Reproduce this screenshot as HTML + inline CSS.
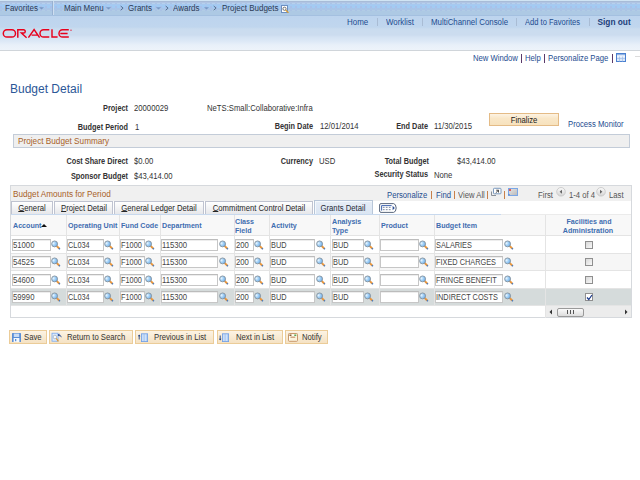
<!DOCTYPE html>
<html><head><meta charset="utf-8">
<style>
*{margin:0;padding:0;box-sizing:border-box}
html,body{width:640px;height:480px;overflow:hidden;background:#fff;font-family:"Liberation Sans",sans-serif;font-size:8.3px;line-height:8.3px;color:#333}
.a{position:absolute;white-space:nowrap}
.r{position:absolute}
</style></head><body>
<svg width="0" height="0" style="position:absolute">
<defs>
<radialGradient id="lg" cx="0.3" cy="0.4" r="0.75"><stop offset="0" stop-color="#e8f6ff"/><stop offset="0.5" stop-color="#9ccdf6"/><stop offset="1" stop-color="#6aa8e6"/></radialGradient>
<symbol id="mag" viewBox="0 0 10 10">
<line x1="5.3" y1="5.6" x2="8.2" y2="8.5" stroke="#e8963c" stroke-width="1.9"/>
<line x1="7.9" y1="8.2" x2="8.9" y2="9.2" stroke="#4a78b8" stroke-width="1.5"/>
<circle cx="3.6" cy="3.9" r="2.95" fill="url(#lg)" stroke="#87939d" stroke-width="0.9"/>
</symbol>
<symbol id="dd" viewBox="0 0 5 3"><path d="M0 0.2H5L2.5 2.4Z" fill="#7898c4"/></symbol>
<symbol id="chev" viewBox="0 0 4 6"><path d="M0.7 1L3.1 3.1L0.7 5.2" fill="none" stroke="#56708f" stroke-width="1"/></symbol>
</defs>
</svg>

<div class="r" style="left:0;top:0;width:640px;height:16px;background:linear-gradient(#d0e4f4 0,#d0e4f4 1px,#a8bcd8 1px,#a8bcd8 2px,#b0c4e4 2px,#b0c4e4 3px,#b4d0ec 3px,#b4d0ec 4px,#a8c8f0 4px,#a8c8f0 5px,#a2cbf3 5px,#a2cbf3 8px,#a8c4e8 8px,#abc5e6 10px,#b0cbe4 10px,#b0cbe4 11px,#adc9e4 11px,#adc9e4 15px);border-bottom:1px solid #a4c0e0"></div>
<div class="r" style="left:0;top:3px;width:640px;height:1px;background:repeating-linear-gradient(90deg,#aac4e6 0 2px,#b6d1ec 2px 5px)"></div>
<div class="r" style="left:0;top:6px;width:640px;height:2px;background:repeating-linear-gradient(90deg,#a9c0ea 0 2px,#a2cbf3 2px 5px)"></div>
<div class="r" style="left:0;top:10px;width:640px;height:1px;background:repeating-linear-gradient(90deg,#aac2e5 0 2px,#b1cce5 2px 5px)"></div>
<div class="r" style="left:0;top:16px;width:640px;height:35px;background:linear-gradient(#bdd4ee 0,#c0d6ee 11px,#cadcef 13px,#ccdcef 19px,#d4e2f3 21px,#dce8f6 25px,#e8f0f9 29px,#edf3fa 34px);border-bottom:1px solid #d0d5da"></div>
<div class="a" id="t0" style="left:5px;transform-origin:0 0;top:4px;font-size:8.3px;line-height:8.3px;color:#2c3b55;transform:scaleX(0.965);">Favorites</div>
<svg class="r" style="left:39px;top:7px" width="5" height="3"><use href="#dd"/></svg>
<div class="r" style="left:52px;top:1px;width:1px;height:14px;background:#98b2d2"></div>
<div class="r" style="left:53px;top:1px;width:1px;height:14px;background:#cfdef0"></div>
<div class="a" id="t1" style="left:63.5px;transform-origin:0 0;top:4px;font-size:8.3px;line-height:8.3px;color:#2c3b55;transform:scaleX(0.965);">Main Menu</div>
<svg class="r" style="left:105.5px;top:7px" width="5" height="3"><use href="#dd"/></svg>
<svg class="r" style="left:119.5px;top:5px" width="4" height="6"><use href="#chev"/></svg>
<div class="a" id="t2" style="left:127.5px;transform-origin:0 0;top:4px;font-size:8.3px;line-height:8.3px;color:#2c3b55;transform:scaleX(0.965);">Grants</div>
<svg class="r" style="left:155.5px;top:7px" width="5" height="3"><use href="#dd"/></svg>
<svg class="r" style="left:164.5px;top:5px" width="4" height="6"><use href="#chev"/></svg>
<div class="a" id="t3" style="left:172.5px;transform-origin:0 0;top:4px;font-size:8.3px;line-height:8.3px;color:#2c3b55;transform:scaleX(0.965);">Awards</div>
<svg class="r" style="left:203.5px;top:7px" width="5" height="3"><use href="#dd"/></svg>
<svg class="r" style="left:212.5px;top:5px" width="4" height="6"><use href="#chev"/></svg>
<div class="a" id="t4" style="left:221.5px;transform-origin:0 0;top:4px;font-size:8.3px;line-height:8.3px;color:#2c3b55;transform:scaleX(0.965);">Project Budgets</div>
<svg class="r" style="left:281px;top:5px" width="8" height="8" viewBox="0 0 8 8"><rect x="0.5" y="0.5" width="6" height="7" fill="#fff" stroke="#6c8fc0"/><circle cx="3.5" cy="3.8" r="1.6" fill="none" stroke="#555" stroke-width="0.8"/><line x1="4.6" y1="5" x2="7.5" y2="7.8" stroke="#d89a30" stroke-width="1.2"/></svg>
<svg class="r" style="left:0;top:26px" width="76" height="15" viewBox="0 0 76 15">
<g fill="none" stroke="#e8001c" stroke-width="1.45">
<rect x="3.3" y="3.75" width="12.2" height="7.25" rx="3.625"/>
<path d="M17.8 11.7V3.75H23.6A1.65 1.65 0 0 1 23.6 7.05H21.4L26.6 11.7"/>
<path d="M28.4 11.7L34.1 3.5L39.6 11.7M31.6 9.1H37.4"/>
<path d="M49.3 3.75H43.6A3.625 3.625 0 0 0 43.6 11H49.3"/>
<path d="M52 3.2V11H57.6"/>
<path d="M68.8 3.75H62.6A3.625 3.625 0 0 0 62.6 11H68.8M60.3 7.4H67.6"/>
</g>
<circle cx="71" cy="4.2" r="0.65" fill="#e8001c"/>
</svg>
<div class="a" id="t5" style="left:347px;transform-origin:0 0;top:18px;font-size:8.3px;line-height:8.3px;color:#1d4c8f;transform:scaleX(0.96);">Home</div>
<div class="r" style="left:377px;top:18px;width:1px;height:8px;background:#a9bcd4"></div>
<div class="a" id="t6" style="left:386px;transform-origin:0 0;top:18px;font-size:8.3px;line-height:8.3px;color:#1d4c8f;transform:scaleX(0.95);">Worklist</div>
<div class="r" style="left:422px;top:18px;width:1px;height:8px;background:#a9bcd4"></div>
<div class="a" id="t7" style="left:431px;transform-origin:0 0;top:18px;font-size:8.3px;line-height:8.3px;color:#1d4c8f;transform:scaleX(0.95);">MultiChannel Console</div>
<div class="r" style="left:516px;top:18px;width:1px;height:8px;background:#a9bcd4"></div>
<div class="a" id="t8" style="left:525px;transform-origin:0 0;top:18px;font-size:8.3px;line-height:8.3px;color:#1d4c8f;transform:scaleX(0.91);">Add to Favorites</div>
<div class="r" style="left:589px;top:18px;width:1px;height:8px;background:#a9bcd4"></div>
<div class="a" id="t9" style="left:597.5px;transform-origin:0 0;top:18px;font-size:8.3px;line-height:8.3px;font-weight:bold;color:#1d3f7a;transform:scaleX(1.0);">Sign out</div>
<div class="a" id="t10" style="left:473px;transform-origin:0 0;top:54px;font-size:8.3px;line-height:8.3px;color:#1d4c8f;transform:scaleX(0.928);">New Window</div>
<div class="r" style="left:521px;top:54px;width:1px;height:9px;background:#5a3a6a"></div>
<div class="a" id="t11" style="left:525px;transform-origin:0 0;top:54px;font-size:8.3px;line-height:8.3px;color:#1d4c8f;transform:scaleX(0.928);">Help</div>
<div class="r" style="left:544px;top:54px;width:1px;height:9px;background:#5a3a6a"></div>
<div class="a" id="t12" style="left:548px;transform-origin:0 0;top:54px;font-size:8.3px;line-height:8.3px;color:#1d4c8f;transform:scaleX(0.928);">Personalize Page</div>
<div class="r" style="left:612px;top:54px;width:1px;height:9px;background:#5a3a6a"></div>
<svg class="r" style="left:616px;top:53px" width="10" height="9" viewBox="0 0 10 9"><rect x="0.5" y="0.5" width="9" height="8" fill="#dce8f8" stroke="#4a80d0"/><rect x="1" y="1" width="8" height="1.5" fill="#8fb2e4"/><rect x="1" y="2.5" width="8" height="1" fill="#fff"/><path d="M1 5.5H9M3.5 3.5V8.5M6.5 3.5V8.5" stroke="#9fbde8" stroke-width="0.7"/></svg>
<div class="r" style="left:635px;top:56px;width:5px;height:1px;background:#dcdcdc"></div>
<div class="a" id="t13" style="left:10px;transform-origin:0 0;top:83px;font-size:12px;line-height:12px;color:#2b5797;transform:scaleX(1.0);">Budget Detail</div>
<div class="a" id="t14" style="left:-272px;width:400px;text-align:right;transform-origin:100% 0;top:104px;font-size:8.3px;line-height:8.3px;font-weight:bold;color:#333;transform:scaleX(0.885);">Project</div>
<div class="a" id="t15" style="left:134px;transform-origin:0 0;top:104px;font-size:8.3px;line-height:8.3px;color:#333;transform:scaleX(0.928);">20000029</div>
<div class="a" id="t16" style="left:206.5px;transform-origin:0 0;top:104px;font-size:8.3px;line-height:8.3px;color:#333;transform:scaleX(0.928);">NeTS:Small:Collaborative:Infra</div>
<div class="a" id="t17" style="left:-272px;width:400px;text-align:right;transform-origin:100% 0;top:123px;font-size:8.3px;line-height:8.3px;font-weight:bold;color:#333;transform:scaleX(0.885);">Budget Period</div>
<div class="a" id="t18" style="left:134.5px;transform-origin:0 0;top:123px;font-size:8.3px;line-height:8.3px;color:#333;transform:scaleX(0.928);">1</div>
<div class="a" id="t19" style="left:-87px;width:400px;text-align:right;transform-origin:100% 0;top:122px;font-size:8.3px;line-height:8.3px;font-weight:bold;color:#333;transform:scaleX(0.885);">Begin Date</div>
<div class="a" id="t20" style="left:319.5px;transform-origin:0 0;top:122px;font-size:8.3px;line-height:8.3px;color:#333;transform:scaleX(0.928);">12/01/2014</div>
<div class="a" id="t21" style="left:28px;width:400px;text-align:right;transform-origin:100% 0;top:122px;font-size:8.3px;line-height:8.3px;font-weight:bold;color:#333;transform:scaleX(0.885);">End Date</div>
<div class="a" id="t22" style="left:434px;transform-origin:0 0;top:122px;font-size:8.3px;line-height:8.3px;color:#333;transform:scaleX(0.928);">11/30/2015</div>
<div class="r" style="left:489px;top:113px;width:70px;height:13px;border:1px solid #e4bb86;background:linear-gradient(#fdf3e3,#f9e7c8 40%,#f7e2bd)"></div>
<div class="a" id="t23" style="left:323.5px;width:400px;text-align:center;transform-origin:50% 0;top:116px;font-size:8.3px;line-height:8.3px;color:#1a1a1a;transform:scaleX(0.928);">Finalize</div>
<div class="a" id="t24" style="left:568.3px;transform-origin:0 0;top:120px;font-size:8.3px;line-height:8.3px;color:#1d4c8f;transform:scaleX(0.928);">Process Monitor</div>
<div class="r" style="left:13px;top:134px;width:617px;height:14px;border:1px solid #c3ccd8;background:#efefef"></div>
<div class="a" id="t25" style="left:17.5px;transform-origin:0 0;top:137px;font-size:9.2px;line-height:9.2px;color:#a85f28;transform:scaleX(0.893);">Project Budget Summary</div>
<div class="a" id="t26" style="left:-272px;width:400px;text-align:right;transform-origin:100% 0;top:157px;font-size:8.3px;line-height:8.3px;font-weight:bold;color:#333;transform:scaleX(0.885);">Cost Share Direct</div>
<div class="a" id="t27" style="left:134px;transform-origin:0 0;top:157px;font-size:8.3px;line-height:8.3px;color:#333;transform:scaleX(0.928);">$0.00</div>
<div class="a" id="t28" style="left:-87px;width:400px;text-align:right;transform-origin:100% 0;top:157px;font-size:8.3px;line-height:8.3px;font-weight:bold;color:#333;transform:scaleX(0.885);">Currency</div>
<div class="a" id="t29" style="left:319px;transform-origin:0 0;top:157px;font-size:8.3px;line-height:8.3px;color:#333;transform:scaleX(0.928);">USD</div>
<div class="a" id="t30" style="left:28.5px;width:400px;text-align:right;transform-origin:100% 0;top:157px;font-size:8.3px;line-height:8.3px;font-weight:bold;color:#333;transform:scaleX(0.885);">Total Budget</div>
<div class="a" id="t31" style="left:457px;transform-origin:0 0;top:157px;font-size:8.3px;line-height:8.3px;color:#333;transform:scaleX(0.928);">$43,414.00</div>
<div class="a" id="t32" style="left:-272px;width:400px;text-align:right;transform-origin:100% 0;top:172px;font-size:8.3px;line-height:8.3px;font-weight:bold;color:#333;transform:scaleX(0.885);">Sponsor Budget</div>
<div class="a" id="t33" style="left:134px;transform-origin:0 0;top:172px;font-size:8.3px;line-height:8.3px;color:#333;transform:scaleX(0.928);">$43,414.00</div>
<div class="a" id="t34" style="left:28px;width:400px;text-align:right;transform-origin:100% 0;top:170px;font-size:8.3px;line-height:8.3px;font-weight:bold;color:#333;transform:scaleX(0.885);">Security Status</div>
<div class="a" id="t35" style="left:434px;transform-origin:0 0;top:171px;font-size:8.3px;line-height:8.3px;color:#333;transform:scaleX(0.928);">None</div>
<div class="r" style="left:10px;top:185px;width:622px;height:133px;border:1px solid #d6d9dd;background:#fff"></div>
<div class="r" style="left:11px;top:186px;width:620px;height:15px;background:#f0f0f0"></div>
<div class="a" id="t36" style="left:13px;transform-origin:0 0;top:190px;font-size:9.2px;line-height:9.2px;color:#a85f28;transform:scaleX(0.89);">Budget Amounts for Period</div>
<div class="a" id="t37" style="left:387px;transform-origin:0 0;top:191px;font-size:8.3px;line-height:8.3px;color:#1d4c8f;transform:scaleX(0.928);">Personalize</div>
<div class="r" style="left:431px;top:191px;width:1px;height:8px;background:#c8804a"></div>
<div class="a" id="t38" style="left:435.5px;transform-origin:0 0;top:191px;font-size:8.3px;line-height:8.3px;color:#1d4c8f;transform:scaleX(0.928);">Find</div>
<div class="r" style="left:454px;top:191px;width:1px;height:8px;background:#c8804a"></div>
<div class="a" id="t39" style="left:458px;transform-origin:0 0;top:191px;font-size:8.3px;line-height:8.3px;color:#555;transform:scaleX(0.928);">View All</div>
<div class="r" style="left:487px;top:191px;width:1px;height:8px;background:#c8804a"></div>
<svg class="r" style="left:490px;top:187px" width="12" height="10" viewBox="0 0 12 10"><path d="M1.5 4.5V8.5H6" fill="none" stroke="#8a9098" stroke-width="1"/><rect x="3.5" y="1.3" width="7.5" height="5.5" rx="0.8" fill="#fff" stroke="#6d8fb8" stroke-width="0.9"/><path d="M6.2 3.2H8.5V5.5M8.3 3.4L5.8 5.8" fill="none" stroke="#222" stroke-width="0.8"/></svg>
<div class="r" style="left:504px;top:191px;width:1px;height:8px;background:#c8804a"></div>
<svg class="r" style="left:508px;top:188px" width="10" height="8" viewBox="0 0 10 8"><defs><linearGradient id="sg" x1="0" y1="0" x2="1" y2="1"><stop offset="0" stop-color="#e8e8e8"/><stop offset="1" stop-color="#b8b8b8"/></linearGradient></defs><rect x="0.5" y="0.5" width="9" height="7" fill="url(#sg)" stroke="#7aa6e6"/><circle cx="2" cy="2" r="1" fill="#e03030"/><rect x="0.6" y="6.2" width="1" height="1" fill="#3060c0"/></svg>
<div class="a" id="t40" style="left:538.3px;transform-origin:0 0;top:191px;font-size:8.3px;line-height:8.3px;color:#555;transform:scaleX(0.928);">First</div>
<svg class="r" style="left:556px;top:187px" width="10" height="10" viewBox="0 0 10 10"><defs><linearGradient id="cg" x1="0" y1="0" x2="0" y2="1"><stop offset="0" stop-color="#fbfbfb"/><stop offset="1" stop-color="#d4d4d4"/></linearGradient></defs><circle cx="5" cy="4.8" r="4.3" fill="url(#cg)" stroke="#c4c4c4" stroke-width="0.8"/><path d="M6 2.8L3.6 4.8L6 6.8Z" fill="#666"/></svg>
<div class="a" id="t41" style="left:568.5px;transform-origin:0 0;top:191px;font-size:8.3px;line-height:8.3px;color:#555;transform:scaleX(0.928);">1-4 of 4</div>
<svg class="r" style="left:596px;top:187px" width="10" height="10" viewBox="0 0 10 10"><circle cx="5" cy="4.8" r="4.3" fill="url(#cg)" stroke="#c4c4c4" stroke-width="0.8"/><path d="M4 2.8L6.4 4.8L4 6.8Z" fill="#666"/></svg>
<div class="a" id="t42" style="left:608.7px;transform-origin:0 0;top:191px;font-size:8.3px;line-height:8.3px;color:#555;transform:scaleX(0.928);">Last</div>
<div class="r" style="left:11px;top:201px;width:42px;height:13px;border:1px solid #bfc3d0;border-bottom:none;background:linear-gradient(#ffffff,#e6e7ea)"></div>
<div class="a" id="t43" style="left:-168.0px;width:400px;text-align:center;transform-origin:50% 0;top:204px;font-size:8.3px;line-height:8.3px;color:#262626;transform:scaleX(0.928);text-underline-offset:0px;text-decoration-thickness:0.8px"><u>G</u>eneral</div>
<div class="r" style="left:54px;top:201px;width:59px;height:13px;border:1px solid #bfc3d0;border-bottom:none;background:linear-gradient(#ffffff,#e6e7ea)"></div>
<div class="a" id="t44" style="left:-116.5px;width:400px;text-align:center;transform-origin:50% 0;top:204px;font-size:8.3px;line-height:8.3px;color:#262626;transform:scaleX(0.928);text-underline-offset:0px;text-decoration-thickness:0.8px"><u>P</u>roject Detail</div>
<div class="r" style="left:114px;top:201px;width:90px;height:13px;border:1px solid #bfc3d0;border-bottom:none;background:linear-gradient(#ffffff,#e6e7ea)"></div>
<div class="a" id="t45" style="left:-41.0px;width:400px;text-align:center;transform-origin:50% 0;top:204px;font-size:8.3px;line-height:8.3px;color:#262626;transform:scaleX(0.928);text-underline-offset:0px;text-decoration-thickness:0.8px"><u>G</u>eneral Ledger Detail</div>
<div class="r" style="left:205px;top:201px;width:108px;height:13px;border:1px solid #bfc3d0;border-bottom:none;background:linear-gradient(#ffffff,#e6e7ea)"></div>
<div class="a" id="t46" style="left:59.0px;width:400px;text-align:center;transform-origin:50% 0;top:204px;font-size:8.3px;line-height:8.3px;color:#262626;transform:scaleX(0.928);text-underline-offset:0px;text-decoration-thickness:0.8px"><u>C</u>ommitment Control Detail</div>
<div class="r" style="left:314px;top:200px;width:59px;height:15px;border:1px solid #b8c6d8;border-bottom:none;box-shadow:inset 1px 1px 0 #f4f8fc;background:linear-gradient(#e6edf7,#dae5f2)"></div>
<div class="a" id="t47" style="left:143px;width:400px;text-align:center;transform-origin:50% 0;top:204px;font-size:8.3px;line-height:8.3px;color:#262a36;transform:scaleX(0.928);">Grants Detail</div>
<svg class="r" style="left:379px;top:203px" width="18" height="10" viewBox="0 0 18 10"><path d="M2 0.6H14.6Q16.9 0.8 17.2 5Q16.9 9.2 14.6 9.4H2A1.4 1.4 0 0 1 0.6 8V2A1.4 1.4 0 0 1 2 0.6Z" fill="#fff" stroke="#5a677e" stroke-width="1"/><path d="M2.6 7.6V2.6H12.6" fill="none" stroke="#2d55a8" stroke-width="0.9"/><g fill="#8f9bb0"><rect x="3.8" y="3.8" width="1.8" height="1.2"/><rect x="6.8" y="3.8" width="1.8" height="1.2"/><rect x="9.8" y="3.8" width="1.8" height="1.2"/><rect x="3.8" y="6" width="1.8" height="1.2"/><rect x="6.8" y="6" width="1.8" height="1.2"/><rect x="9.8" y="6" width="1.8" height="1.2"/></g><path d="M13.6 2.8L15.8 5L13.6 7.2Z" fill="#2d4f96"/></svg>
<div class="r" style="left:11px;top:214px;width:620px;height:21px;background:#f8f8f8;border-top:1px solid #ebebeb"></div>
<div class="r" style="left:11px;top:214px;width:490px;height:1px;background:#c8d9ee"></div>
<div class="r" style="left:11px;top:254px;width:620px;height:16px;background:#f6f6f6"></div>
<div class="r" style="left:11px;top:235px;width:620px;height:1px;background:#e4e4e4"></div>
<div class="r" style="left:11px;top:253px;width:620px;height:1px;background:#e4e4e4"></div>
<div class="r" style="left:11px;top:270px;width:620px;height:1px;background:#e4e4e4"></div>
<div class="r" style="left:11px;top:288px;width:620px;height:1px;background:#e4e4e4"></div>
<div class="r" style="left:11px;top:289px;width:620px;height:17px;background:#d5dbdb"></div>
<div class="r" style="left:11px;top:305px;width:620px;height:1px;background:#e4e4e4"></div>
<div class="r" style="left:66px;top:215px;width:1px;height:90px;background:#e4e4e4"></div>
<div class="r" style="left:119px;top:215px;width:1px;height:90px;background:#e4e4e4"></div>
<div class="r" style="left:160px;top:215px;width:1px;height:90px;background:#e4e4e4"></div>
<div class="r" style="left:234px;top:215px;width:1px;height:90px;background:#e4e4e4"></div>
<div class="r" style="left:269px;top:215px;width:1px;height:90px;background:#e4e4e4"></div>
<div class="r" style="left:330px;top:215px;width:1px;height:90px;background:#e4e4e4"></div>
<div class="r" style="left:379px;top:215px;width:1px;height:90px;background:#e4e4e4"></div>
<div class="r" style="left:434px;top:215px;width:1px;height:90px;background:#e4e4e4"></div>
<div class="r" style="left:545px;top:215px;width:1px;height:103px;background:#e4e4e4"></div>
<div class="a" id="t48" style="left:12.8px;transform-origin:0 0;top:222px;font-size:8px;line-height:8px;font-weight:bold;color:#3f6db0;transform:scaleX(0.89);">Account</div>
<svg class="r" style="left:41px;top:224px" width="6" height="3" viewBox="0 0 6 3"><path d="M0 3L3 0L6 3Z" fill="#111"/></svg>
<div class="a" id="t49" style="left:67.6px;transform-origin:0 0;top:222px;font-size:8px;line-height:8px;font-weight:bold;color:#3f6db0;transform:scaleX(0.89);">Operating Unit</div>
<div class="a" id="t50" style="left:120.6px;transform-origin:0 0;top:222px;font-size:8px;line-height:8px;font-weight:bold;color:#3f6db0;transform:scaleX(0.89);">Fund Code</div>
<div class="a" id="t51" style="left:161.8px;transform-origin:0 0;top:222px;font-size:8px;line-height:8px;font-weight:bold;color:#3f6db0;transform:scaleX(0.89);">Department</div>
<div class="a" id="t52" style="left:235.2px;transform-origin:0 0;top:218px;font-size:8px;line-height:8px;font-weight:bold;color:#3f6db0;transform:scaleX(0.89);">Class</div>
<div class="a" id="t53" style="left:235.2px;transform-origin:0 0;top:226.5px;font-size:8px;line-height:8px;font-weight:bold;color:#3f6db0;transform:scaleX(0.89);">Field</div>
<div class="a" id="t54" style="left:270.8px;transform-origin:0 0;top:222px;font-size:8px;line-height:8px;font-weight:bold;color:#3f6db0;transform:scaleX(0.89);">Activity</div>
<div class="a" id="t55" style="left:332px;transform-origin:0 0;top:218px;font-size:8px;line-height:8px;font-weight:bold;color:#3f6db0;transform:scaleX(0.89);">Analysis</div>
<div class="a" id="t56" style="left:332px;transform-origin:0 0;top:226.5px;font-size:8px;line-height:8px;font-weight:bold;color:#3f6db0;transform:scaleX(0.89);">Type</div>
<div class="a" id="t57" style="left:380.8px;transform-origin:0 0;top:222px;font-size:8px;line-height:8px;font-weight:bold;color:#3f6db0;transform:scaleX(0.89);">Product</div>
<div class="a" id="t58" style="left:436px;transform-origin:0 0;top:222px;font-size:8px;line-height:8px;font-weight:bold;color:#3f6db0;transform:scaleX(0.89);">Budget Item</div>
<div class="a" id="t59" style="left:388.5px;width:400px;text-align:center;transform-origin:50% 0;top:218px;font-size:8px;line-height:8px;font-weight:bold;color:#3f6db0;transform:scaleX(0.89);">Facilities and</div>
<div class="a" id="t60" style="left:388px;width:400px;text-align:center;transform-origin:50% 0;top:226.5px;font-size:8px;line-height:8px;font-weight:bold;color:#3f6db0;transform:scaleX(0.89);">Administration</div>
<div class="r" style="left:12px;top:239px;width:39px;height:12px;border:1px solid #c6c6c6;border-top-color:#bcbcbc;box-shadow:inset 0 1px 0 #ededed;background:#fff"></div>
<div class="a" id="t61" style="left:13px;transform-origin:0 0;top:241px;font-size:8.3px;line-height:8.3px;color:#444;transform:scaleX(0.928);">51000</div>
<svg class="r" style="left:51px;top:240px" width="10" height="10"><use href="#mag"/></svg>
<div class="r" style="left:67px;top:239px;width:37px;height:12px;border:1px solid #c6c6c6;border-top-color:#bcbcbc;box-shadow:inset 0 1px 0 #ededed;background:#fff"></div>
<div class="a" id="t62" style="left:68px;transform-origin:0 0;top:241px;font-size:8.3px;line-height:8.3px;color:#444;transform:scaleX(0.885);">CL034</div>
<svg class="r" style="left:104px;top:240px" width="10" height="10"><use href="#mag"/></svg>
<div class="r" style="left:120px;top:239px;width:25px;height:12px;border:1px solid #c6c6c6;border-top-color:#bcbcbc;box-shadow:inset 0 1px 0 #ededed;background:#fff"></div>
<div class="a" id="t63" style="left:121px;transform-origin:0 0;top:241px;font-size:8.3px;line-height:8.3px;color:#444;transform:scaleX(0.885);">F1000</div>
<svg class="r" style="left:145px;top:240px" width="10" height="10"><use href="#mag"/></svg>
<div class="r" style="left:161px;top:239px;width:57px;height:12px;border:1px solid #c6c6c6;border-top-color:#bcbcbc;box-shadow:inset 0 1px 0 #ededed;background:#fff"></div>
<div class="a" id="t64" style="left:162px;transform-origin:0 0;top:241px;font-size:8.3px;line-height:8.3px;color:#444;transform:scaleX(0.928);">115300</div>
<svg class="r" style="left:219px;top:240px" width="10" height="10"><use href="#mag"/></svg>
<div class="r" style="left:235px;top:239px;width:19px;height:12px;border:1px solid #c6c6c6;border-top-color:#bcbcbc;box-shadow:inset 0 1px 0 #ededed;background:#fff"></div>
<div class="a" id="t65" style="left:236px;transform-origin:0 0;top:241px;font-size:8.3px;line-height:8.3px;color:#444;transform:scaleX(0.928);">200</div>
<svg class="r" style="left:254px;top:240px" width="10" height="10"><use href="#mag"/></svg>
<div class="r" style="left:270px;top:239px;width:45px;height:12px;border:1px solid #c6c6c6;border-top-color:#bcbcbc;box-shadow:inset 0 1px 0 #ededed;background:#fff"></div>
<div class="a" id="t66" style="left:271px;transform-origin:0 0;top:241px;font-size:8.3px;line-height:8.3px;color:#444;transform:scaleX(0.885);">BUD</div>
<svg class="r" style="left:316px;top:240px" width="10" height="10"><use href="#mag"/></svg>
<div class="r" style="left:332px;top:239px;width:32px;height:12px;border:1px solid #c6c6c6;border-top-color:#bcbcbc;box-shadow:inset 0 1px 0 #ededed;background:#fff"></div>
<div class="a" id="t67" style="left:333px;transform-origin:0 0;top:241px;font-size:8.3px;line-height:8.3px;color:#444;transform:scaleX(0.885);">BUD</div>
<svg class="r" style="left:364px;top:240px" width="10" height="10"><use href="#mag"/></svg>
<div class="r" style="left:380px;top:239px;width:39px;height:12px;border:1px solid #c6c6c6;border-top-color:#bcbcbc;box-shadow:inset 0 1px 0 #ededed;background:#fff"></div>
<svg class="r" style="left:419px;top:240px" width="10" height="10"><use href="#mag"/></svg>
<div class="r" style="left:435px;top:239px;width:68px;height:12px;border:1px solid #c6c6c6;border-top-color:#bcbcbc;box-shadow:inset 0 1px 0 #ededed;background:#fff"></div>
<div class="a" id="t68" style="left:436px;transform-origin:0 0;top:241px;font-size:8.3px;line-height:8.3px;color:#444;transform:scaleX(0.885);">SALARIES</div>
<svg class="r" style="left:504px;top:240px" width="10" height="10"><use href="#mag"/></svg>
<div class="r" style="left:585px;top:241px;width:8px;height:8px;border:1px solid #8f8f8f;background:linear-gradient(135deg,#d8d8d8,#f8f8f8)"></div>
<div class="r" style="left:12px;top:256px;width:39px;height:12px;border:1px solid #c6c6c6;border-top-color:#bcbcbc;box-shadow:inset 0 1px 0 #ededed;background:#fff"></div>
<div class="a" id="t69" style="left:13px;transform-origin:0 0;top:258px;font-size:8.3px;line-height:8.3px;color:#444;transform:scaleX(0.928);">54525</div>
<svg class="r" style="left:51px;top:257px" width="10" height="10"><use href="#mag"/></svg>
<div class="r" style="left:67px;top:256px;width:37px;height:12px;border:1px solid #c6c6c6;border-top-color:#bcbcbc;box-shadow:inset 0 1px 0 #ededed;background:#fff"></div>
<div class="a" id="t70" style="left:68px;transform-origin:0 0;top:258px;font-size:8.3px;line-height:8.3px;color:#444;transform:scaleX(0.885);">CL034</div>
<svg class="r" style="left:104px;top:257px" width="10" height="10"><use href="#mag"/></svg>
<div class="r" style="left:120px;top:256px;width:25px;height:12px;border:1px solid #c6c6c6;border-top-color:#bcbcbc;box-shadow:inset 0 1px 0 #ededed;background:#fff"></div>
<div class="a" id="t71" style="left:121px;transform-origin:0 0;top:258px;font-size:8.3px;line-height:8.3px;color:#444;transform:scaleX(0.885);">F1000</div>
<svg class="r" style="left:145px;top:257px" width="10" height="10"><use href="#mag"/></svg>
<div class="r" style="left:161px;top:256px;width:57px;height:12px;border:1px solid #c6c6c6;border-top-color:#bcbcbc;box-shadow:inset 0 1px 0 #ededed;background:#fff"></div>
<div class="a" id="t72" style="left:162px;transform-origin:0 0;top:258px;font-size:8.3px;line-height:8.3px;color:#444;transform:scaleX(0.928);">115300</div>
<svg class="r" style="left:219px;top:257px" width="10" height="10"><use href="#mag"/></svg>
<div class="r" style="left:235px;top:256px;width:19px;height:12px;border:1px solid #c6c6c6;border-top-color:#bcbcbc;box-shadow:inset 0 1px 0 #ededed;background:#fff"></div>
<div class="a" id="t73" style="left:236px;transform-origin:0 0;top:258px;font-size:8.3px;line-height:8.3px;color:#444;transform:scaleX(0.928);">200</div>
<svg class="r" style="left:254px;top:257px" width="10" height="10"><use href="#mag"/></svg>
<div class="r" style="left:270px;top:256px;width:45px;height:12px;border:1px solid #c6c6c6;border-top-color:#bcbcbc;box-shadow:inset 0 1px 0 #ededed;background:#fff"></div>
<div class="a" id="t74" style="left:271px;transform-origin:0 0;top:258px;font-size:8.3px;line-height:8.3px;color:#444;transform:scaleX(0.885);">BUD</div>
<svg class="r" style="left:316px;top:257px" width="10" height="10"><use href="#mag"/></svg>
<div class="r" style="left:332px;top:256px;width:32px;height:12px;border:1px solid #c6c6c6;border-top-color:#bcbcbc;box-shadow:inset 0 1px 0 #ededed;background:#fff"></div>
<div class="a" id="t75" style="left:333px;transform-origin:0 0;top:258px;font-size:8.3px;line-height:8.3px;color:#444;transform:scaleX(0.885);">BUD</div>
<svg class="r" style="left:364px;top:257px" width="10" height="10"><use href="#mag"/></svg>
<div class="r" style="left:380px;top:256px;width:39px;height:12px;border:1px solid #c6c6c6;border-top-color:#bcbcbc;box-shadow:inset 0 1px 0 #ededed;background:#fff"></div>
<svg class="r" style="left:419px;top:257px" width="10" height="10"><use href="#mag"/></svg>
<div class="r" style="left:435px;top:256px;width:68px;height:12px;border:1px solid #c6c6c6;border-top-color:#bcbcbc;box-shadow:inset 0 1px 0 #ededed;background:#fff"></div>
<div class="a" id="t76" style="left:436px;transform-origin:0 0;top:258px;font-size:8.3px;line-height:8.3px;color:#444;transform:scaleX(0.885);">FIXED CHARGES</div>
<svg class="r" style="left:504px;top:257px" width="10" height="10"><use href="#mag"/></svg>
<div class="r" style="left:585px;top:258px;width:8px;height:8px;border:1px solid #8f8f8f;background:linear-gradient(135deg,#d8d8d8,#f8f8f8)"></div>
<div class="r" style="left:12px;top:274px;width:39px;height:12px;border:1px solid #c6c6c6;border-top-color:#bcbcbc;box-shadow:inset 0 1px 0 #ededed;background:#fff"></div>
<div class="a" id="t77" style="left:13px;transform-origin:0 0;top:276px;font-size:8.3px;line-height:8.3px;color:#444;transform:scaleX(0.928);">54600</div>
<svg class="r" style="left:51px;top:275px" width="10" height="10"><use href="#mag"/></svg>
<div class="r" style="left:67px;top:274px;width:37px;height:12px;border:1px solid #c6c6c6;border-top-color:#bcbcbc;box-shadow:inset 0 1px 0 #ededed;background:#fff"></div>
<div class="a" id="t78" style="left:68px;transform-origin:0 0;top:276px;font-size:8.3px;line-height:8.3px;color:#444;transform:scaleX(0.885);">CL034</div>
<svg class="r" style="left:104px;top:275px" width="10" height="10"><use href="#mag"/></svg>
<div class="r" style="left:120px;top:274px;width:25px;height:12px;border:1px solid #c6c6c6;border-top-color:#bcbcbc;box-shadow:inset 0 1px 0 #ededed;background:#fff"></div>
<div class="a" id="t79" style="left:121px;transform-origin:0 0;top:276px;font-size:8.3px;line-height:8.3px;color:#444;transform:scaleX(0.885);">F1000</div>
<svg class="r" style="left:145px;top:275px" width="10" height="10"><use href="#mag"/></svg>
<div class="r" style="left:161px;top:274px;width:57px;height:12px;border:1px solid #c6c6c6;border-top-color:#bcbcbc;box-shadow:inset 0 1px 0 #ededed;background:#fff"></div>
<div class="a" id="t80" style="left:162px;transform-origin:0 0;top:276px;font-size:8.3px;line-height:8.3px;color:#444;transform:scaleX(0.928);">115300</div>
<svg class="r" style="left:219px;top:275px" width="10" height="10"><use href="#mag"/></svg>
<div class="r" style="left:235px;top:274px;width:19px;height:12px;border:1px solid #c6c6c6;border-top-color:#bcbcbc;box-shadow:inset 0 1px 0 #ededed;background:#fff"></div>
<div class="a" id="t81" style="left:236px;transform-origin:0 0;top:276px;font-size:8.3px;line-height:8.3px;color:#444;transform:scaleX(0.928);">200</div>
<svg class="r" style="left:254px;top:275px" width="10" height="10"><use href="#mag"/></svg>
<div class="r" style="left:270px;top:274px;width:45px;height:12px;border:1px solid #c6c6c6;border-top-color:#bcbcbc;box-shadow:inset 0 1px 0 #ededed;background:#fff"></div>
<div class="a" id="t82" style="left:271px;transform-origin:0 0;top:276px;font-size:8.3px;line-height:8.3px;color:#444;transform:scaleX(0.885);">BUD</div>
<svg class="r" style="left:316px;top:275px" width="10" height="10"><use href="#mag"/></svg>
<div class="r" style="left:332px;top:274px;width:32px;height:12px;border:1px solid #c6c6c6;border-top-color:#bcbcbc;box-shadow:inset 0 1px 0 #ededed;background:#fff"></div>
<div class="a" id="t83" style="left:333px;transform-origin:0 0;top:276px;font-size:8.3px;line-height:8.3px;color:#444;transform:scaleX(0.885);">BUD</div>
<svg class="r" style="left:364px;top:275px" width="10" height="10"><use href="#mag"/></svg>
<div class="r" style="left:380px;top:274px;width:39px;height:12px;border:1px solid #c6c6c6;border-top-color:#bcbcbc;box-shadow:inset 0 1px 0 #ededed;background:#fff"></div>
<svg class="r" style="left:419px;top:275px" width="10" height="10"><use href="#mag"/></svg>
<div class="r" style="left:435px;top:274px;width:68px;height:12px;border:1px solid #c6c6c6;border-top-color:#bcbcbc;box-shadow:inset 0 1px 0 #ededed;background:#fff"></div>
<div class="a" id="t84" style="left:436px;transform-origin:0 0;top:276px;font-size:8.3px;line-height:8.3px;color:#444;transform:scaleX(0.885);">FRINGE BENEFIT</div>
<svg class="r" style="left:504px;top:275px" width="10" height="10"><use href="#mag"/></svg>
<div class="r" style="left:585px;top:276px;width:8px;height:8px;border:1px solid #8f8f8f;background:linear-gradient(135deg,#d8d8d8,#f8f8f8)"></div>
<div class="r" style="left:12px;top:291px;width:39px;height:12px;border:1px solid #c6c6c6;border-top-color:#bcbcbc;box-shadow:inset 0 1px 0 #ededed;background:#fff"></div>
<div class="a" id="t85" style="left:13px;transform-origin:0 0;top:293px;font-size:8.3px;line-height:8.3px;color:#444;transform:scaleX(0.928);">59990</div>
<svg class="r" style="left:51px;top:292px" width="10" height="10"><use href="#mag"/></svg>
<div class="r" style="left:67px;top:291px;width:37px;height:12px;border:1px solid #c6c6c6;border-top-color:#bcbcbc;box-shadow:inset 0 1px 0 #ededed;background:#fff"></div>
<div class="a" id="t86" style="left:68px;transform-origin:0 0;top:293px;font-size:8.3px;line-height:8.3px;color:#444;transform:scaleX(0.885);">CL034</div>
<svg class="r" style="left:104px;top:292px" width="10" height="10"><use href="#mag"/></svg>
<div class="r" style="left:120px;top:291px;width:25px;height:12px;border:1px solid #c6c6c6;border-top-color:#bcbcbc;box-shadow:inset 0 1px 0 #ededed;background:#fff"></div>
<div class="a" id="t87" style="left:121px;transform-origin:0 0;top:293px;font-size:8.3px;line-height:8.3px;color:#444;transform:scaleX(0.885);">F1000</div>
<svg class="r" style="left:145px;top:292px" width="10" height="10"><use href="#mag"/></svg>
<div class="r" style="left:161px;top:291px;width:57px;height:12px;border:1px solid #c6c6c6;border-top-color:#bcbcbc;box-shadow:inset 0 1px 0 #ededed;background:#fff"></div>
<div class="a" id="t88" style="left:162px;transform-origin:0 0;top:293px;font-size:8.3px;line-height:8.3px;color:#444;transform:scaleX(0.928);">115300</div>
<svg class="r" style="left:219px;top:292px" width="10" height="10"><use href="#mag"/></svg>
<div class="r" style="left:235px;top:291px;width:19px;height:12px;border:1px solid #c6c6c6;border-top-color:#bcbcbc;box-shadow:inset 0 1px 0 #ededed;background:#fff"></div>
<div class="a" id="t89" style="left:236px;transform-origin:0 0;top:293px;font-size:8.3px;line-height:8.3px;color:#444;transform:scaleX(0.928);">200</div>
<svg class="r" style="left:254px;top:292px" width="10" height="10"><use href="#mag"/></svg>
<div class="r" style="left:270px;top:291px;width:45px;height:12px;border:1px solid #c6c6c6;border-top-color:#bcbcbc;box-shadow:inset 0 1px 0 #ededed;background:#fff"></div>
<div class="a" id="t90" style="left:271px;transform-origin:0 0;top:293px;font-size:8.3px;line-height:8.3px;color:#444;transform:scaleX(0.885);">BUD</div>
<svg class="r" style="left:316px;top:292px" width="10" height="10"><use href="#mag"/></svg>
<div class="r" style="left:332px;top:291px;width:32px;height:12px;border:1px solid #c6c6c6;border-top-color:#bcbcbc;box-shadow:inset 0 1px 0 #ededed;background:#fff"></div>
<div class="a" id="t91" style="left:333px;transform-origin:0 0;top:293px;font-size:8.3px;line-height:8.3px;color:#444;transform:scaleX(0.885);">BUD</div>
<svg class="r" style="left:364px;top:292px" width="10" height="10"><use href="#mag"/></svg>
<div class="r" style="left:380px;top:291px;width:39px;height:12px;border:1px solid #c6c6c6;border-top-color:#bcbcbc;box-shadow:inset 0 1px 0 #ededed;background:#fff"></div>
<svg class="r" style="left:419px;top:292px" width="10" height="10"><use href="#mag"/></svg>
<div class="r" style="left:435px;top:291px;width:68px;height:12px;border:1px solid #c6c6c6;border-top-color:#bcbcbc;box-shadow:inset 0 1px 0 #ededed;background:#fff"></div>
<div class="a" id="t92" style="left:436px;transform-origin:0 0;top:293px;font-size:8.3px;line-height:8.3px;color:#444;transform:scaleX(0.885);">INDIRECT COSTS</div>
<svg class="r" style="left:504px;top:292px" width="10" height="10"><use href="#mag"/></svg>
<div class="r" style="left:585px;top:293px;width:8px;height:8px;border:1px solid #8f8f8f;background:linear-gradient(135deg,#d8d8d8,#f8f8f8)"></div>
<div class="r" style="left:586px;top:294px;width:6px;height:6px;background:#fff"></div><svg class="r" style="left:586px;top:294px" width="7" height="7" viewBox="0 0 7 7"><path d="M1 3.5L2.8 5.5L6 1" fill="none" stroke="#1a3a8a" stroke-width="1.2"/></svg>
<div class="r" style="left:546px;top:306px;width:85px;height:11px;background:#ececec"></div>
<svg class="r" style="left:549px;top:309px" width="4" height="6" viewBox="0 0 4 6"><path d="M3 0.5L0.5 3L3 5.5Z" fill="#333"/></svg>
<svg class="r" style="left:624px;top:309px" width="4" height="6" viewBox="0 0 4 6"><path d="M1 0.5L3.5 3L1 5.5Z" fill="#333"/></svg>
<div class="r" style="left:557px;top:308px;width:27px;height:9px;border:1px solid #9a9a9a;border-radius:2px;background:linear-gradient(#fafafa,#dcdcdc)"></div>
<div class="r" style="left:567px;top:310px;width:7px;height:4px;border-left:1px solid #555;border-right:1px solid #555"></div>
<div class="r" style="left:570px;top:310px;width:1px;height:4px;background:#555"></div>
<div class="r" style="left:9px;top:330px;width:38px;height:14px;border:1px solid #ebcc98;background:linear-gradient(#fcf3e4,#f5e2c3)"></div>
<svg class="r" style="left:12px;top:333px" width="9" height="9" viewBox="0 0 9 9"><rect x="0" y="0" width="9" height="9" rx="0.5" fill="#5a8ed6"/><rect x="1.8" y="0.6" width="5.4" height="3.4" fill="#c9dcf4"/><rect x="1.6" y="5" width="5.8" height="4" fill="#f4f8fc"/><rect x="3" y="6" width="1.3" height="2.2" fill="#5a8ed6"/></svg>
<div class="a" id="t93" style="left:24px;transform-origin:0 0;top:333px;font-size:8.3px;line-height:8.3px;color:#333;transform:scaleX(0.928);">Save</div>
<div class="r" style="left:49px;top:330px;width:84px;height:14px;border:1px solid #ebcc98;background:linear-gradient(#fcf3e4,#f5e2c3)"></div>
<svg class="r" style="left:51px;top:332px" width="12" height="11" viewBox="0 0 12 11"><rect x="1" y="1.2" width="6" height="8" fill="#dceafa" stroke="#78a8ee" stroke-width="0.8"/><circle cx="3.9" cy="5" r="1.8" fill="#f6f9fc" stroke="#a6b2c0" stroke-width="0.8"/><line x1="5.2" y1="6.4" x2="7.4" y2="9.4" stroke="#e0962e" stroke-width="1.1"/><path d="M7.2 3Q9.8 2.6 10.3 5.2" fill="none" stroke="#2a4f9a" stroke-width="0.9"/><path d="M6.6 3L8.4 1.6L8.4 4.4Z" fill="#1f3f8a"/></svg>
<div class="a" id="t94" style="left:66.5px;transform-origin:0 0;top:333px;font-size:8.3px;line-height:8.3px;color:#333;transform:scaleX(0.928);">Return to Search</div>
<div class="r" style="left:135px;top:330px;width:79px;height:14px;border:1px solid #ebcc98;background:linear-gradient(#fcf3e4,#f5e2c3)"></div>
<svg class="r" style="left:138px;top:332px" width="11" height="11" viewBox="0 0 11 11"><rect x="3.4" y="1.8" width="6.2" height="7.8" fill="#b4d0f4" stroke="#6f9ee6" stroke-width="0.8"/><path d="M4.8 2.5V9M7.6 2.5V9" stroke="#dce9fb" stroke-width="0.8"/><path d="M1.2 7.5V3.2" stroke="#1f3f80" stroke-width="0.9"/><path d="M-0.1 4.2L1.2 2.4L2.5 4.2Z" fill="#1f3f80"/></svg>
<div class="a" id="t95" style="left:153.5px;transform-origin:0 0;top:333px;font-size:8.3px;line-height:8.3px;color:#333;transform:scaleX(0.928);">Previous in List</div>
<div class="r" style="left:217px;top:330px;width:66px;height:14px;border:1px solid #ebcc98;background:linear-gradient(#fcf3e4,#f5e2c3)"></div>
<svg class="r" style="left:219px;top:332px" width="11" height="11" viewBox="0 0 11 11"><rect x="3.4" y="1.8" width="6.2" height="7.8" fill="#b4d0f4" stroke="#6f9ee6" stroke-width="0.8"/><path d="M4.8 2.5V9M7.6 2.5V9" stroke="#dce9fb" stroke-width="0.8"/><path d="M1.2 3.5V7.8" stroke="#1f3f80" stroke-width="0.9"/><path d="M-0.1 6.8L1.2 8.6L2.5 6.8Z" fill="#1f3f80"/></svg>
<div class="a" id="t96" style="left:235.6px;transform-origin:0 0;top:333px;font-size:8.3px;line-height:8.3px;color:#333;transform:scaleX(0.928);">Next in List</div>
<div class="r" style="left:285px;top:330px;width:43px;height:14px;border:1px solid #ebcc98;background:linear-gradient(#fcf3e4,#f5e2c3)"></div>
<svg class="r" style="left:288px;top:333px" width="10" height="9" viewBox="0 0 10 9"><rect x="0.5" y="0.5" width="9" height="7.8" rx="0.8" fill="#fbf3dc" stroke="#c8986c"/><rect x="1.5" y="1.6" width="2" height="1.2" fill="#6a3c14"/><rect x="3.8" y="1.6" width="2" height="1.2" fill="#fff"/><rect x="6.3" y="1.6" width="2" height="1.2" fill="#2f9a3a"/><path d="M2.4 4.2H7.2" stroke="#b07a4c" stroke-width="0.9"/><rect x="1.2" y="3" width="0.9" height="4" fill="#fff"/></svg>
<div class="a" id="t97" style="left:301.8px;transform-origin:0 0;top:333px;font-size:8.3px;line-height:8.3px;color:#333;transform:scaleX(0.928);">Notify</div>
</body></html>
